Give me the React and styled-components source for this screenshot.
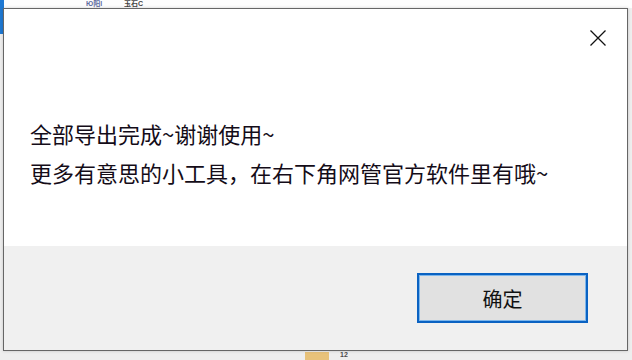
import React from "react";
import styled, { createGlobalStyle } from "styled-components";

const Global = createGlobalStyle`
  html, body { margin: 0; padding: 0; }
  body {
    width: 632px;
    height: 360px;
    overflow: hidden;
    background: #f4f4f4;
    font-family: "Noto Sans CJK SC", "Noto Sans", sans-serif;
  }
`;

const Desktop = styled.div`
  position: relative;
  width: 632px;
  height: 360px;
  box-sizing: border-box;
  padding: 8px 4px 9px 3px;
  background: linear-gradient(#fdfdfd 0, #fdfdfd 8px, #eeeeee 8px);
  display: flex;
`;

const BackBlue = styled.div`
  position: absolute;
  left: 0;
  top: 0;
  width: 4px;
  height: 34px;
  background: #1e78d2;
`;

const BackText = styled.span`
  position: absolute;
  left: ${(p) => p.x}px;
  top: ${(p) => p.y}px;
  font-family: "Liberation Sans", "Noto Sans CJK SC", sans-serif;
  font-size: 7px;
  line-height: 8px;
  font-weight: bold;
  color: ${(p) => p.c || "#333"};
  opacity: 0.8;
`;

const BackTag = styled.div`
  position: absolute;
  left: 305px;
  bottom: 0;
  width: 24px;
  height: 8px;
  background: #e8c27a;
`;

const Dialog = styled.div`
  position: relative;
  z-index: 1;
  flex: 1;
  display: flex;
  flex-direction: column;
  border: 1px solid #666;
  box-shadow: 0 0 3px rgba(0, 0, 0, 0.18);
  background: #fff;
`;

const Body = styled.div`
  height: 237px;
  display: flex;
  flex-direction: column;
  background: #ffffff;
`;

const TitleBar = styled.div`
  height: 60px;
  box-sizing: border-box;
  display: flex;
  justify-content: flex-end;
  align-items: flex-start;
  padding: 21px 21px 0 0;
`;

const CloseButton = styled.button`
  width: 16px;
  height: 16px;
  padding: 0;
  border: 0;
  background: transparent;
  display: flex;
  cursor: pointer;
`;

const Message = styled.div`
  margin-top: 45px;
  padding-left: 26px;
  font-size: 22px;
  line-height: 39px;
  color: #140c18;
  white-space: nowrap;
`;

const Line = styled.div``;

const Footer = styled.div`
  flex: 1;
  background: #f0f0f0;
  display: flex;
  justify-content: flex-end;
  align-items: flex-start;
  padding: 27px 39px 0 0;
`;

const OkButton = styled.button`
  width: 171px;
  height: 50px;
  box-sizing: border-box;
  border: 2px solid #0a62c2;
  box-shadow: inset 0 0 0 1px #7cb6ec;
  background: #e1e1e1;
  font-family: "Noto Sans CJK SC", sans-serif;
  font-size: 20px;
  color: #111;
  padding: 0;
  display: flex;
  align-items: center;
  justify-content: center;
  cursor: pointer;
`;

export default function App() {
  return (
    <>
      <Global />
      <Desktop>
        <BackBlue />
        <BackText x={86} y={0} c="#3a4a8a">Ю阳l</BackText>
        <BackText x={124} y={0} c="#111">玉石C</BackText>
        <BackTag />
        <BackText x={340} y={351} c="#222">12</BackText>
        <Dialog>
          <Body>
            <TitleBar>
              <CloseButton aria-label="关闭">
                <svg width="16" height="16" viewBox="0 0 16 16">
                  <path d="M0.5 0.5 L15.5 15.5 M15.5 0.5 L0.5 15.5" stroke="#111" strokeWidth="1.3" fill="none" />
                </svg>
              </CloseButton>
            </TitleBar>
            <Message>
              <Line>全部导出完成~谢谢使用~</Line>
              <Line>更多有意思的小工具，在右下角网管官方软件里有哦~</Line>
            </Message>
          </Body>
          <Footer>
            <OkButton>确定</OkButton>
          </Footer>
        </Dialog>
      </Desktop>
    </>
  );
}
